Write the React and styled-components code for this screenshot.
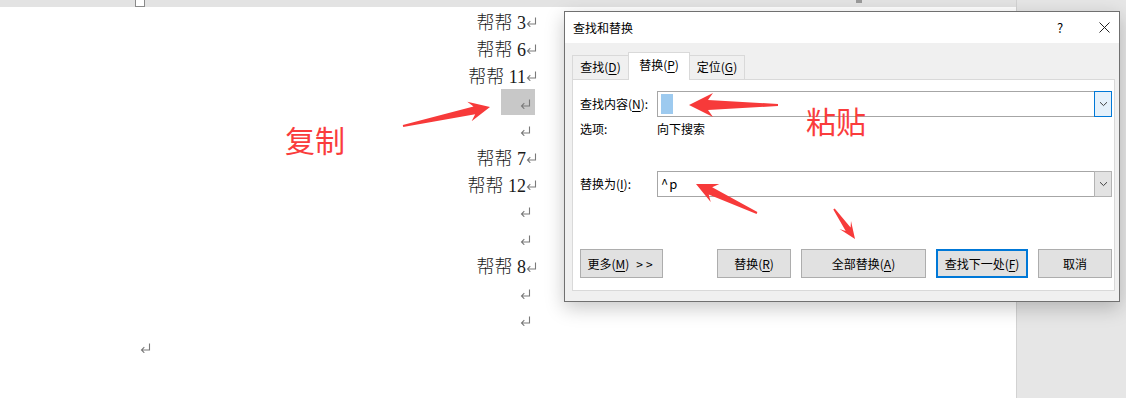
import React from 'react';
import styled, { createGlobalStyle } from 'styled-components';

const GlobalStyle = createGlobalStyle`
  html, body { margin: 0; padding: 0; overflow: hidden; background: #fff; }
  body { font-family: "Noto Sans CJK SC", "Noto Sans", sans-serif; }
`;

const Screen = styled.div`
  position: relative;
  width: 1126px;
  height: 398px;
  overflow: hidden;
  display: flex;
`;

const DocColumn = styled.div`
  width: 1016px;
  display: flex;
  flex-direction: column;
`;

const Ruler = styled.div`
  height: 7px;
  flex: none;
  background: #e3e3e3;
  display: flex;
  align-items: flex-start;
`;

const RulerBox = styled.div`
  margin-left: 135px;
  width: 10px;
  height: 7px;
  box-sizing: border-box;
  border: 1px solid #8a8a8a;
  border-top: none;
  background: #fff;
`;

const RulerTick = styled.div`
  margin-left: 711px;
  width: 6px;
  height: 3px;
  background: #9a9a9a;
`;

const Side = styled.div`
  flex: 1;
  background: #e6e6e6;
  border-left: 1px solid #d2d2d2;
`;

const Page = styled.div`
  flex: 1;
  background: #fff;
`;

const Lines = styled.div`
  width: 537px;
  display: flex;
  flex-direction: column;
  align-items: flex-end;
`;

const Line = styled.div`
  height: 27.2px;
  display: flex;
  align-items: center;
  align-self: ${p => (p.$left ? 'flex-start' : 'auto')};
  margin-left: ${p => (p.$left ? '140px' : '0')};
  margin-right: ${p => p.$mr || 0}px;
  font-family: "Liberation Serif", "Noto Sans CJK SC", serif;
  font-size: 18px;
  font-weight: 300;
  color: #1a1a1a;
  white-space: pre;
`;

const Highlight = styled.div`
  width: 34px;
  height: 26px;
  background: #c8c8c8;
  display: flex;
  align-items: center;
  justify-content: flex-end;
  padding-right: 4px;
  box-sizing: border-box;
`;

const RetSvg = styled.svg`
  display: block;
  flex: none;
  margin-top: 3px;
`;

const Ret = () => (
  <RetSvg width="11" height="10" viewBox="0 0 11 10">
    <path d="M9.5 0.5V7H1.5M4.3 4.2L1.5 7L4.3 9.8" fill="none" stroke="#7a7a7a" strokeWidth="1.1" />
  </RetSvg>
);

const Dialog = styled.div`
  position: absolute;
  left: 564px;
  top: 11px;
  width: 556px;
  height: 291px;
  box-sizing: border-box;
  border: 1px solid #707070;
  background: #f0f0f0;
  box-shadow: 0 6px 18px rgba(0, 0, 0, 0.22);
  display: flex;
  flex-direction: column;
  font-family: "Noto Sans CJK SC", sans-serif;
  font-size: 12px;
  line-height: 16px;
  color: #000;
`;

const TitleBar = styled.div`
  height: 31px;
  flex: none;
  background: #fff;
  display: flex;
  align-items: center;
  padding-left: 8px;
  padding-right: 5px;
`;

const Title = styled.div`
  flex: 1;
`;

const TitleButton = styled.div`
  width: 20px;
  height: 20px;
  display: flex;
  align-items: center;
  justify-content: center;
  margin-left: ${p => p.$ml || 0}px;
  font-size: 13px;
`;

const Body = styled.div`
  flex: 1;
  display: flex;
  flex-direction: column;
  padding: 9px 4px 10px 7px;
`;

const TabRow = styled.div`
  height: 28px;
  flex: none;
  display: flex;
  align-items: flex-end;
  position: relative;
  z-index: 1;
`;

const Tab = styled.div`
  box-sizing: border-box;
  width: ${p => p.$w}px;
  height: ${p => (p.$active ? 28 : 25)}px;
  margin-left: ${p => (p.$first ? 0 : -1)}px;
  background: ${p => (p.$active ? '#fff' : '#f0f0f0')};
  border: 1px solid #d9d9d9;
  border-bottom: ${p => (p.$active ? 'none' : '1px solid #d9d9d9')};
  display: flex;
  align-items: center;
  justify-content: center;
  padding-bottom: ${p => (p.$active ? 3 : 1)}px;
  position: relative;
  z-index: ${p => (p.$active ? 2 : 1)};
`;

const U = styled.span`
  text-decoration: underline;
  text-underline-offset: 2px;
`;

const Panel = styled.div`
  flex: 1;
  margin-top: -1px;
  background: #fff;
  border: 1px solid #d9d9d9;
  padding: 11px 2px 0 7px;
  display: flex;
  flex-direction: column;
`;

const FieldRow = styled.div`
  height: 26px;
  flex: none;
  display: flex;
  align-items: center;
  margin-top: ${p => p.$mt || 0}px;
`;

const Label = styled.div`
  width: 77px;
  flex: none;
`;

const Combo = styled.div`
  flex: 1;
  height: 26px;
  box-sizing: border-box;
  border: 1px solid #a6a6a6;
  background: #fff;
  display: flex;
`;

const ComboText = styled.div`
  flex: 1;
  display: flex;
  align-items: center;
  padding-left: 3px;
  font-size: 13px;
  letter-spacing: 1px;
`;

const Selection = styled.div`
  width: 12px;
  height: 20px;
  background: #9dcaef;
`;

const DropButton = styled.div`
  width: 18px;
  margin: -1px -1px -1px 0;
  box-sizing: border-box;
  display: flex;
  align-items: center;
  justify-content: center;
  background: ${p => (p.$focus ? '#e5f1fb' : '#e3e3e3')};
  border: 1px solid ${p => (p.$focus ? '#0078d7' : '#b3b3b3')};
`;

const Chevron = () => (
  <svg width="9" height="6" viewBox="0 0 9 6">
    <path d="M1 1.2L4.5 4.6L8 1.2" fill="none" stroke="#404040" strokeWidth="1" />
  </svg>
);

const OptionRow = styled.div`
  height: 22px;
  margin-top: 1px;
  flex: none;
  display: flex;
  align-items: center;
`;

const ButtonRow = styled.div`
  height: 29px;
  margin-top: 52px;
  flex: none;
  display: flex;
  gap: 10px;
`;

const Spacer = styled.div`
  flex: 1;
`;

const Button = styled.div`
  width: ${p => p.$w}px;
  height: 29px;
  box-sizing: border-box;
  flex: none;
  background: #e1e1e1;
  border: ${p => (p.$primary ? '2px solid #0078d7' : '1px solid #adadad')};
  display: flex;
  align-items: center;
  justify-content: center;
  white-space: pre;
`;

const Gt = styled.span`
  margin-left: 7px;
  letter-spacing: 3px;
`;

const Overlay = styled.svg`
  position: absolute;
  left: 0;
  top: 0;
  pointer-events: none;
  z-index: 5;
`;

const Note = styled.div`
  position: absolute;
  left: ${p => p.$x}px;
  top: ${p => p.$y}px;
  font-family: "Noto Sans CJK SC", sans-serif;
  font-size: 30px;
  line-height: 30px;
  color: #fa3c3c;
  z-index: 6;
`;

function arrow(x1, y1, x2, y2, tail, shaft, head, len) {
  const dx = x2 - x1;
  const dy = y2 - y1;
  const L = Math.hypot(dx, dy);
  const ux = dx / L;
  const uy = dy / L;
  const nx = -uy;
  const ny = ux;
  const bx = x2 - ux * len;
  const by = y2 - uy * len;
  const pts = [
    [x1 + nx * tail, y1 + ny * tail],
    [bx + nx * shaft + ux * 3, by + ny * shaft + uy * 3],
    [bx + nx * head - ux * 2, by + ny * head - uy * 2],
    [x2, y2],
    [bx - nx * head - ux * 2, by - ny * head - uy * 2],
    [bx - nx * shaft + ux * 3, by - ny * shaft + uy * 3],
    [x1 - nx * tail, y1 - ny * tail],
  ];
  return pts.map(p => p.map(v => v.toFixed(1)).join(',')).join(' ');
}

const arrows = [
  arrow(403, 126, 490, 107, 1, 4, 10, 19),
  arrow(778, 105, 689, 105, 1, 5, 12, 22),
  arrow(757, 213, 696, 184, 1, 4, 10, 19),
  arrow(834, 209, 855, 239, 0.8, 3, 7, 15),
];

const docLines = [
  { t: '帮帮 3' },
  { t: '帮帮 6' },
  { t: '帮帮 11' },
  { hl: true },
  { empty: true },
  { t: '帮帮 7' },
  { t: '帮帮 12' },
  { empty: true },
  { empty: true },
  { t: '帮帮 8' },
  { empty: true },
  { empty: true },
];

export default function App() {
  return (
    <>
      <GlobalStyle />
      <Screen>
        <DocColumn>
          <Ruler>
            <RulerBox />
            <RulerTick />
          </Ruler>
          <Page>
            <Lines>
              {docLines.map((l, i) => {
                if (l.hl)
                  return (
                    <Line key={i} $mr={2}>
                      <Highlight>
                        <Ret />
                      </Highlight>
                    </Line>
                  );
                if (l.empty)
                  return (
                    <Line key={i} $mr={6}>
                      <Ret />
                    </Line>
                  );
                return (
                  <Line key={i}>
                    {l.t}
                    <Ret />
                  </Line>
                );
              })}
              <Line $left>
                <Ret />
              </Line>
            </Lines>
          </Page>
        </DocColumn>
        <Side />

        <Dialog>
          <TitleBar>
            <Title>查找和替换</Title>
            <TitleButton>?</TitleButton>
            <TitleButton $ml={24}>
              <svg width="11" height="11" viewBox="0 0 11 11">
                <path d="M0.5 0.5L10.5 10.5M10.5 0.5L0.5 10.5" stroke="#222" strokeWidth="1" />
              </svg>
            </TitleButton>
          </TitleBar>
          <Body>
            <TabRow>
              <Tab $first $w={57}>
                查找(<U>D</U>)
              </Tab>
              <Tab $active $w={62}>
                替换(<U>P</U>)
              </Tab>
              <Tab $w={56}>
                定位(<U>G</U>)
              </Tab>
            </TabRow>
            <Panel>
              <FieldRow>
                <Label>
                  查找内容(<U>N</U>):
                </Label>
                <Combo>
                  <ComboText>
                    <Selection />
                  </ComboText>
                  <DropButton $focus>
                    <Chevron />
                  </DropButton>
                </Combo>
              </FieldRow>
              <OptionRow>
                <Label>选项:</Label>
                <div>向下搜索</div>
              </OptionRow>
              <FieldRow $mt={31}>
                <Label>
                  替换为(<U>I</U>):
                </Label>
                <Combo>
                  <ComboText>^p</ComboText>
                  <DropButton>
                    <Chevron />
                  </DropButton>
                </Combo>
              </FieldRow>
              <ButtonRow>
                <Button $w={83}>
                  <span>
                    更多(<U>M</U>)
                  </span>
                  <Gt>{'>>'}</Gt>
                </Button>
                <Spacer />
                <Button $w={74}>
                  替换(<U>R</U>)
                </Button>
                <Button $w={125}>
                  全部替换(<U>A</U>)
                </Button>
                <Button $w={92} $primary>
                  查找下一处(<U>F</U>)
                </Button>
                <Button $w={74}>取消</Button>
              </ButtonRow>
            </Panel>
          </Body>
        </Dialog>

        <Overlay width="1126" height="398" viewBox="0 0 1126 398">
          {arrows.map((p, i) => (
            <polygon key={i} points={p} fill="#f73a3a" />
          ))}
        </Overlay>
        <Note $x={285} $y={124}>复制</Note>
        <Note $x={806} $y={105}>粘贴</Note>
      </Screen>
    </>
  );
}
